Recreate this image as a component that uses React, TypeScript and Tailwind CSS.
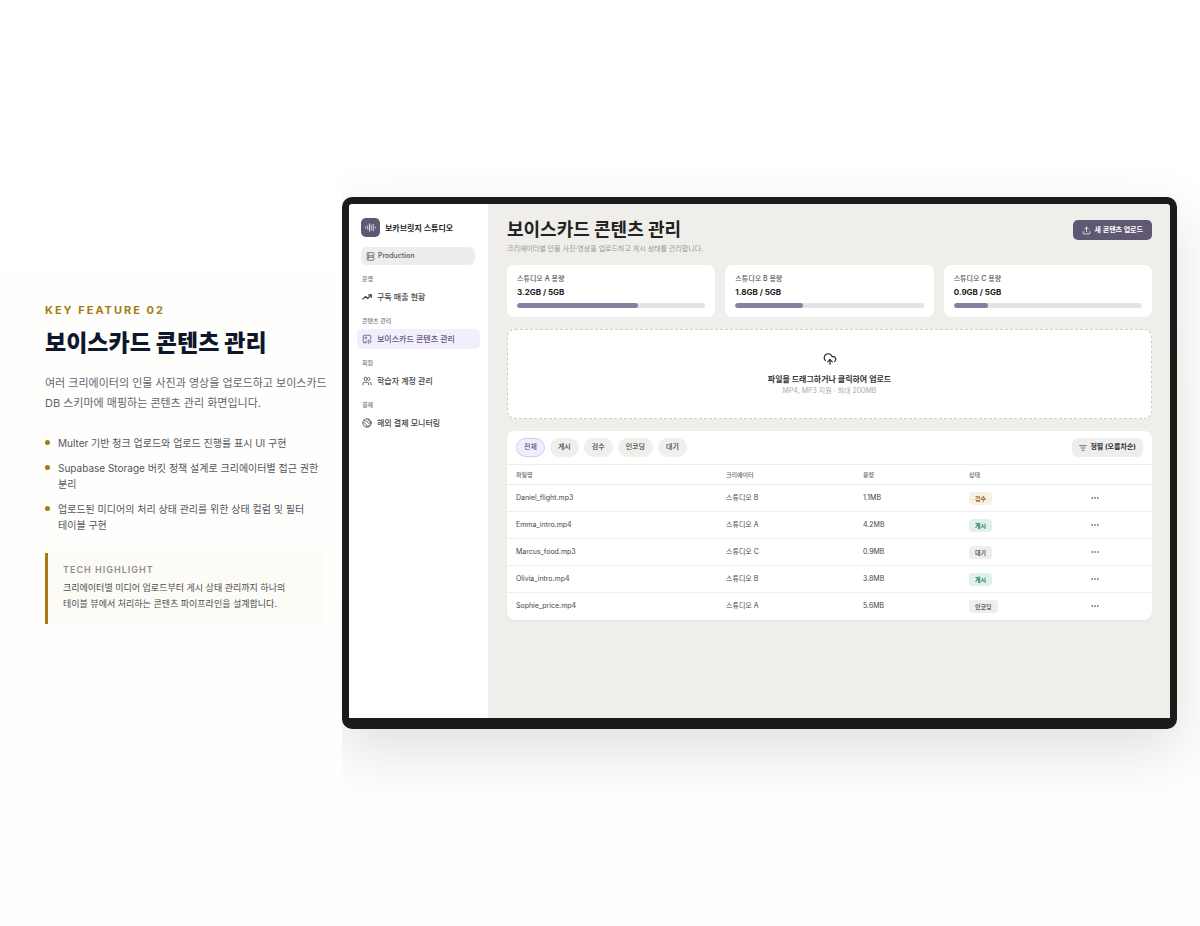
import React, { useState } from 'react';
import { CloudUpload, ImagePlay, ListFilter, TrendingUp, Upload, Users } from 'lucide-react';

const bullets = [
    'Multer 기반 청크 업로드와 업로드 진행률 표시 UI 구현',
    'Supabase Storage 버킷 정책 설계로 크리에이터별 접근 권한 분리',
    '업로드된 미디어의 처리 상태 관리를 위한 상태 컬럼 및 필터 테이블 구현',
];

const storages = [
    { name: '스튜디오 A 용량', used: 3.2, total: 5 },
    { name: '스튜디오 B 용량', used: 1.8, total: 5 },
    { name: '스튜디오 C 용량', used: 0.9, total: 5 },
];

const filters = ['전체', '게시', '검수', '인코딩', '대기'];

const files = [
    { name: 'Daniel_flight.mp3', creator: '스튜디오 B', size: '1.1MB', status: '검수' },
    { name: 'Emma_intro.mp4', creator: '스튜디오 A', size: '4.2MB', status: '게시' },
    { name: 'Marcus_food.mp3', creator: '스튜디오 C', size: '0.9MB', status: '대기' },
    { name: 'Olivia_intro.mp4', creator: '스튜디오 B', size: '3.8MB', status: '게시' },
    { name: 'Sophie_price.mp4', creator: '스튜디오 A', size: '5.6MB', status: '인코딩' },
];

const statusStyle: Record<string, string> = {
    '검수': 'bg-[#f7f1e3] text-[#94691f]',
    '게시': 'bg-[#dff1e8] text-[#1d7a50]',
    '대기': 'bg-[#eeeeee] text-[#5c5c5c]',
    '인코딩': 'bg-[#eeeeee] text-[#5c5c5c]',
};

function WaveIcon() {
    return (
        <svg className="size-[11px]" viewBox="0 0 22 22" fill="none" stroke="currentColor" strokeWidth="2" strokeLinecap="round">
            <path d="M1.5 10v2M5.5 7.5v7M9 3.5v15M12.5 6v10M16.5 4.5v13M20.5 10v2" />
        </svg>
    );
}

function ServerIcon() {
    return (
        <svg className="size-[9px]" viewBox="0 0 24 24" fill="none" stroke="currentColor" strokeWidth="2" strokeLinecap="round">
            <rect x="2.5" y="2" width="19" height="8" rx="3" />
            <rect x="2.5" y="14" width="19" height="8" rx="3" />
            <path d="M5 10v4M19 10v4M6.5 6h.5M6.5 18h.5" />
        </svg>
    );
}

function GlobeIcon() {
    return (
        <svg className="size-[10px]" viewBox="0 0 24 24" fill="none" stroke="currentColor" strokeWidth="2" strokeLinecap="round" strokeLinejoin="round">
            <circle cx="12" cy="12" r="10" />
            <path d="M5 5c2 1 3 3 6 3s2 3 4 4 4-1 6 0M2.5 11c3-.5 4 1 5 3s3 1 4 3 0 3 0 4M15 2.5c-1 2 0 3 2 4s2 2 4 2M15 21c0-2 1-4 5-4" />
        </svg>
    );
}

const menu = [
    { group: '운영', label: '구독 매출 현황', icon: <TrendingUp size={10} strokeWidth={3} /> },
    { group: '콘텐츠 관리', label: '보이스카드 콘텐츠 관리', icon: <ImagePlay size={10} />, active: true },
    { group: '회원', label: '학습자 계정 관리', icon: <Users size={10} /> },
    { group: '결제', label: '해외 결제 모니터링', icon: <GlobeIcon /> },
];

function Sidebar() {
    return (
        <aside className="w-[139px] shrink-0 bg-white px-2 pt-[14px]">
            <div className="flex items-center gap-[5px] pl-1">
                <span className="flex size-[19px] items-center justify-center rounded-[5px] bg-[#5f5873] text-[#d9d3ea]">
                    <WaveIcon />
                </span>
                <strong className="text-[8px] leading-[12px] font-bold text-[#222222]">보카브릿지 스튜디오</strong>
            </div>
            <button className="mt-[10px] ml-1 flex h-[18px] w-[114px] items-center gap-[3px] rounded-[6px] bg-[#ededed] px-[5px] text-[7px] font-medium text-[#555555]">
                <ServerIcon />
                Production
            </button>
            <nav className="mt-[9px] flex flex-col gap-[9px]">
                {menu.map((item) => (
                    <div key={item.group}>
                        <p className="pl-[5px] text-[6px] leading-[10px] font-medium text-[#777777]">{item.group}</p>
                        <a
                            href="#"
                            className={`mt-[3px] flex h-[20px] items-center gap-[5px] rounded-[5px] px-[5px] text-[8px] font-medium ${item.active ? 'bg-[#f3eefe] text-[#5f5873]' : 'text-[#444444]'}`}
                        >
                            {item.icon}
                            <span>{item.label}</span>
                        </a>
                    </div>
                ))}
            </nav>
        </aside>
    );
}

function FileTable() {
    const [filter, setFilter] = useState('전체');
    const rows = filter === '전체' ? files : files.filter((f) => f.status === filter);

    return (
        <section className="mt-3 overflow-hidden rounded-[8px] bg-white shadow-xs">
            <div className="flex h-[33px] items-center justify-between px-[9px]">
                <div className="flex gap-[5px]">
                    {filters.map((f) => (
                        <button
                            key={f}
                            onClick={() => setFilter(f)}
                            className={`h-[19px] rounded-full border px-[7px] text-[7px] font-medium ${f === filter ? 'border-[#d5caf2] bg-[#f2edfe] text-[#5f5873]' : 'border-[#efefec] bg-[#efefec] text-[#444444]'}`}
                        >
                            {f}
                        </button>
                    ))}
                </div>
                <button className="flex h-[19px] items-center gap-[3px] rounded-[6px] bg-[#eeeeee] px-[7px] text-[7px] font-bold text-[#333333]">
                    <ListFilter size={8} />
                    정렬 (오름차순)
                </button>
            </div>
            <table className="w-full table-fixed text-left text-[#444444]">
                <thead>
                    <tr className="h-[20px] border-y border-[#ededed] text-[6px] text-[#666666]">
                        <th className="w-[210px] px-[9px] font-medium">파일명</th>
                        <th className="w-[137px] px-[9px] font-medium">크리에이터</th>
                        <th className="w-[106px] px-[9px] font-medium">용량</th>
                        <th className="w-[122px] px-[9px] font-medium">상태</th>
                        <th className="px-[9px]" aria-label="작업"></th>
                    </tr>
                </thead>
                <tbody>
                    {rows.map((file) => (
                        <tr key={file.name} className="h-[27px] border-b border-[#efefef] text-[7px] last:border-b-0">
                            <td className="px-[9px]">{file.name}</td>
                            <td className="px-[9px]">{file.creator}</td>
                            <td className="px-[9px]">{file.size}</td>
                            <td className="px-[9px]">
                                <span className={`flex h-[13px] w-fit items-center rounded-[4px] px-[6px] text-[6px] font-bold ${statusStyle[file.status]}`}>
                                    {file.status}
                                </span>
                            </td>
                            <td className="px-[9px]">
                                <button className="flex h-3 items-center" aria-label="더보기">
                                    <svg className="h-[2px] w-[8px]" viewBox="0 0 8 2" fill="#333333">
                                        <circle cx="1.2" cy="1" r="0.8" />
                                        <circle cx="4" cy="1" r="0.8" />
                                        <circle cx="6.8" cy="1" r="0.8" />
                                    </svg>
                                </button>
                            </td>
                        </tr>
                    ))}
                </tbody>
            </table>
        </section>
    );
}

function Dashboard() {
    return (
        <main className="min-w-0 flex-1 bg-[#efeeea] pt-[13px] pr-[18px] pl-[19px]">
            <header className="flex items-start justify-between">
                <div>
                    <h2 className="text-[18px] leading-[26px] font-bold text-[#222222]">보이스카드 콘텐츠 관리</h2>
                    <p className="text-[7px] leading-[12px] text-[#999999]">크리에이터별 인물 사진·영상을 업로드하고 게시 상태를 관리합니다.</p>
                </div>
                <button className="mt-[3px] flex h-5 items-center gap-1 rounded-[5px] bg-[#5f5873] px-[9px] text-[7px] font-bold text-white">
                    <Upload size={9} />
                    새 콘텐츠 업로드
                </button>
            </header>

            <div className="mt-[10px] grid grid-cols-3 gap-[10px]">
                {storages.map((s) => (
                    <div key={s.name} className="rounded-[7px] bg-white px-[10px] pt-2 pb-[9px]">
                        <p className="text-[7px] leading-[12px] font-medium text-[#555555]">{s.name}</p>
                        <p className="text-[8px] leading-[14px] font-bold text-[#222222]">{s.used}GB / {s.total}GB</p>
                        <div className="mt-1 h-[5px] overflow-hidden rounded-full bg-[#e4e4e4]">
                            <div className="h-full rounded-full bg-[#8880a3]" style={{ width: `${(s.used / s.total) * 100}%` }} />
                        </div>
                    </div>
                ))}
            </div>

            <button className="mt-3 flex h-[90px] w-full flex-col items-center justify-center rounded-[8px] border border-dashed border-[#cccccc] bg-white">
                <CloudUpload size={14} className="text-[#222222]" />
                <span className="mt-[7px] text-[8px] leading-[12px] font-bold text-[#333333]">파일을 드래그하거나 클릭하여 업로드</span>
                <span className="text-[7px] leading-[11px] text-[#aaaaaa]">MP4, MP3 지원 · 최대 200MB</span>
            </button>

            <FileTable />
        </main>
    );
}

export default function App() {
    return (
        <div className="flex min-h-screen items-center gap-[13px] overflow-hidden bg-linear-to-b from-white to-[#fdfdfb] pr-[23px] pl-[45px] font-['Inter','Noto_Sans_CJK_KR',sans-serif] break-keep">
            <section className="w-[284px] shrink-0">
                <p className="text-[11px] leading-[14px] font-bold tracking-[2px] text-[#a67c10]">KEY FEATURE 02</p>
                <h1 className="mt-[10px] text-[23px] leading-[32px] font-extrabold text-[#0f172a]">보이스카드 콘텐츠 관리</h1>
                <p className="mt-[14px] text-[11px] leading-[20px] text-[#64646c]">
                    여러 크리에이터의 인물 사진과 영상을 업로드하고 보이스카드 DB 스키마에 매핑하는 콘텐츠 관리 화면입니다.
                </p>
                <ul className="mt-[22px] flex flex-col gap-[9px] text-[10px] leading-[16px] text-[#55555c]">
                    {bullets.map((text) => (
                        <li key={text} className="flex gap-2 pr-1">
                            <span className="mt-[5px] size-[5px] shrink-0 rounded-full bg-[#a67c10]" />
                            {text}
                        </li>
                    ))}
                </ul>
                <div className="mt-5 mr-[6px] rounded-r-[4px] border-l-[3px] border-[#a67c10] bg-[#fcfbf6] pt-[9px] pb-3 pl-[15px]">
                    <h3 className="text-[9px] leading-[16px] font-semibold tracking-[1px] text-[#8f8f8f]">TECH HIGHLIGHT</h3>
                    <p className="mt-[2px] text-[9px] leading-[16px] text-[#4b4b52]">
                        크리에이터별 미디어 업로드부터 게시 상태 관리까지 하나의<br />
                        테이블 뷰에서 처리하는 콘텐츠 파이프라인을 설계합니다.
                    </p>
                </div>
            </section>

            <div className="min-w-0 flex-1 [clip-path:inset(-120px_-60px_-120px_0px)]">
                <div className="flex min-h-[532px] overflow-hidden rounded-[10px] border-[7px] border-b-[11px] border-[#1b1b1a] bg-[#1b1b1a] shadow-[0_20px_56px_rgba(0,0,0,0.12)]">
                    <Sidebar />
                    <Dashboard />
                </div>
            </div>
        </div>
    );
}
